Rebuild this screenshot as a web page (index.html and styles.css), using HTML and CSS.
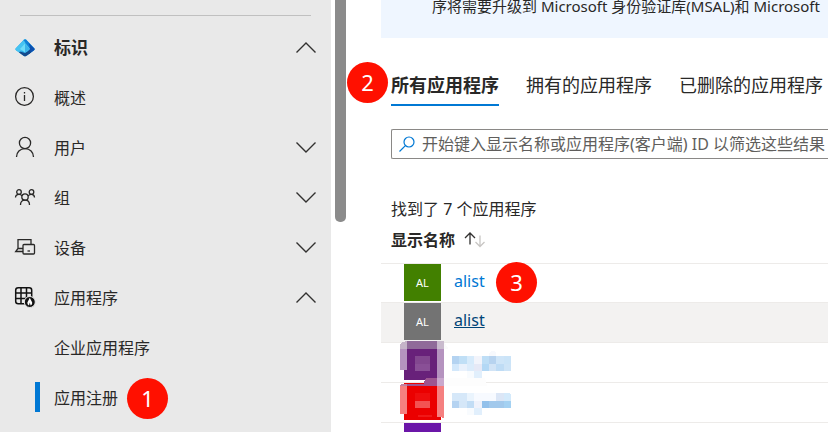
FILE: index.html
```html
<!DOCTYPE html>
<html lang="zh-CN">
<head>
  <meta charset="UTF-8">
  <meta name="viewport" content="width=device-width, initial-scale=1.0">
  <title>应用注册</title>
  <link rel="stylesheet" href="styles.css">
</head>
<body>
  <div class="page">
    <nav class="sidebar">
      <hr>
      <button class="item title" type="button">
        <svg class="icon" viewBox="0 0 20 20">
          <path d="M9 1.6Q10 .6 11 1.6L19.4 10.6Q20 11.6 19 12.3L11.5 17.8Q10 18.9 8.500 17.800L1 12.300Q0 11.600.6 10.600Z" fill="#2aa9e8"/>
          <path d="M10 1L.6 10.600Q0 11.600 1 12.300L5 15L10 8Z" fill="#45c3f2"/>
          <path d="M11 1.600L19.400 10.600Q20 11.600 19 12.300L14 15.900L14 9.500L8.500 1.900Z" fill="#1180d6"/>
          <path d="M13.500 5L19.400 10.600Q20 11.600 19 12.300L11.500 17.800L15 9Z" fill="#0d4fae"/>
          <path d="M5 13.500L10 15L15 12L16 14.500L11.500 17.800Q10 18.900 8.500 17.800L4 14.500Z" fill="#144a8c"/>
          <path d="M10 5.500L15 11L10 14.500L5 11Z" fill="#6fdcf8"/>
          <path d="M10 5.500L15 11L10 14.500Z" fill="#3bb4ea"/>
        </svg>
        <span>标识</span>
        <svg class="chevron" viewBox="0 0 20 12"><path d="M.5 10.500L10 1L19.500 10.500"/></svg>
      </button>
      <a class="item" href="#">
        <svg class="icon line" viewBox="0 0 20 20">
          <circle cx="9.500" cy="8.500" r="8.900"/>
          <path d="M9.500 7V13M9.500 4V5.500"/>
        </svg>
        <span>概述</span>
      </a>
      <button class="item" type="button">
        <svg class="icon line" viewBox="0 0 20 20">
          <circle cx="10" cy="5" r="5.600"/>
          <path d="M1.500 19C1.500 14 5 10.600 10 10.600S18.500 14 18.500 19"/>
        </svg>
        <span>用户</span>
        <svg class="chevron" viewBox="0 0 20 12"><path d="M.5 .5L10 10L19.500 .5"/></svg>
      </button>
      <button class="item" type="button">
        <svg class="icon line" viewBox="0 0 20 20">
          <circle cx="4" cy="4" r="2.300"/>
          <circle cx="16.500" cy="4" r="2.300"/>
          <circle cx="10" cy="9" r="3.200"/>
          <path d="M.5 9.500C.5 7.500 2 6.300 4 6.300S6.500 7 7 8M13 8C13.800 7 14.500 6.300 16.500 6.300S19.500 7.500 19.500 9.500M5.500 17C5.500 14 7 12.200 10 12.200S14.500 14 14.500 17"/>
        </svg>
        <span>组</span>
        <svg class="chevron" viewBox="0 0 20 12"><path d="M.5 .5L10 10L19.500 .5"/></svg>
      </button>
      <button class="item" type="button">
        <svg class="icon line" viewBox="0 0 20 20">
          <path d="M8 13.500H.7L3 10.500V1.700H16V6.500M3 10.500H8"/>
          <rect x="8" y="6.500" width="11.500" height="9.500" rx="1"/>
          <path d="M12.500 13H15"/>
        </svg>
        <span>设备</span>
        <svg class="chevron" viewBox="0 0 20 12"><path d="M.5 .5L10 10L19.500 .5"/></svg>
      </button>
      <button class="item" type="button">
        <svg class="icon apps" viewBox="0 0 20 20">
          <rect x=".7" y="-.3" width="16" height="16" rx="2.500"/>
          <path d="M6 0V15.500M11.500 0V15.500M1 5H16.500M1 10.500H16.500"/>
          <circle cx="14.800" cy="14" r="5.500" class="disc"/>
          <path d="M14.800 9.800L12.400 14.500L12.600 16.200L14 17.400L14.800 14.500L15.600 17.400L17 16.200L17.200 14.500Z" class="mark"/>
        </svg>
        <span>应用程序</span>
        <svg class="chevron" viewBox="0 0 20 12"><path d="M.5 10.500L10 1L19.500 10.500"/></svg>
      </button>
      <a class="item sub" href="#"><span>企业应用程序</span></a>
      <a class="item sub active" href="#"><span>应用注册</span><b class="step step-1">1</b></a>
    </nav>
    <div class="gutter"><div class="scrollbar"></div></div>
    <main>
      <div class="notice">序将需要升级到 Microsoft 身份验证库(MSAL)和 Microsoft</div>
      <div class="tabs">
        <b class="step step-2">2</b>
        <button class="tab selected" type="button">所有应用程序</button>
        <button class="tab" type="button">拥有的应用程序</button>
        <button class="tab" type="button">已删除的应用程序</button>
      </div>
      <label class="search">
        <svg viewBox="0 0 16 16"><circle cx="10" cy="6" r="5"/><path d="M6.400 9.600L.5 15.500"/></svg>
        <input type="text" placeholder="开始键入显示名称或应用程序(客户端) ID 以筛选这些结果" aria-label="搜索">
      </label>
      <p class="count">找到了 7 个应用程序</p>
      <div class="list">
        <table>
          <thead>
            <tr>
              <th colspan="2">显示名称
                <svg class="sort" viewBox="0 0 22 16">
                  <path d="M6 12.500V1.500M1 6L6 1L11 6"/>
                  <path class="down" d="M16 3.500V14.500M11.500 10L16 14.500L20.500 10"/>
                </svg>
              </th>
            </tr>
          </thead>
          <tbody>
            <tr class="first">
              <td class="pic"><div class="avatar green">AL</div></td>
              <td class="name"><a href="#">alist</a><b class="step step-3">3</b></td>
            </tr>
            <tr class="hover">
              <td class="pic"><div class="avatar gray">AL</div></td>
              <td class="name"><a href="#">alist</a></td>
            </tr>
            <tr>
              <td class="pic"><div class="avatar purple"></div></td>
              <td class="name"></td>
            </tr>
            <tr>
              <td class="pic"><div class="avatar red"></div></td>
              <td class="name"></td>
            </tr>
            <tr>
              <td class="pic"><div class="avatar violet"></div></td>
              <td class="name"></td>
            </tr>
          </tbody>
        </table>
        <!-- pixelated names and avatars of the other apps -->
        <svg class="mosaic" viewBox="0 0 390 291" shape-rendering="crispEdges">
          <path d="M51 15H141V39H51Z" fill="#906b99"/>
          <path d="M30 26L38 18L51 15V102H30Z" fill="#b593bf"/>
          <path d="M30 26L38 18L51 15V39H30Z" fill="#c5b4c8"/>
          <path d="M141 15H162V126H141Z" fill="#b593bf"/>
          <path d="M141 15H162V39H141Z" fill="#c9bbcd"/>
          <path d="M162 18L175 38H162Z" fill="#fafafa"/>
          <path d="M75 60H120V83H75Z" fill="#82478f"/>
          <path d="M75 83H120V105H75Z" fill="#894f96"/>
          <path d="M108 126H141V150H51V144H100Z" fill="#9d5690"/>
          <path d="M141 126H162V150H141Z" fill="#c9a8cd"/>
          <path d="M162 126H285L291 150H162Z" fill="#fdfdfd"/>
          <path d="M30 148L36 144H51V234H30Z" fill="#f58080"/>
          <path d="M30 148L36 144H51V150H30Z" fill="#c2819f"/>
          <path d="M141 150H162V245H156V243H141Z" fill="#f58080"/>
          <path d="M84 237H125V243H84Z" fill="#f01818"/>
          <path d="M75 172H120V195H75Z" fill="#ee0d0d"/>
          <path d="M75 195H120V216H75Z" fill="#f35252"/>
          <path d="M186 60H207V83H186Z" fill="#b4d3f1"/>
          <path d="M207 60H231V83H207Z" fill="#c0dff6"/>
          <path d="M231 60H252V83H231Z" fill="#d7ebfb"/>
          <path d="M252 60H276V83H252Z" fill="#f2f4fb"/>
          <path d="M276 60H297V83H276Z" fill="#bedef6"/>
          <path d="M297 60H318V83H297Z" fill="#b7d3ef"/>
          <path d="M318 60H342V83H318Z" fill="#cfe5f8"/>
          <path d="M342 60H363V83H342Z" fill="#cbe4f8"/>
          <path d="M297 51L303 45H312L318 51V60H297Z" fill="#f7f9fd"/>
          <path d="M186 83H207V105H186Z" fill="#d3e8fb"/>
          <path d="M207 83H231V105H207Z" fill="#e9f1fc"/>
          <path d="M231 83H252V105H231Z" fill="#dcecfb"/>
          <path d="M252 83H276V105H252Z" fill="#e6e9f6"/>
          <path d="M276 83H297V105H276Z" fill="#b3d8f5"/>
          <path d="M297 83H318V105H297Z" fill="#d2e4f6"/>
          <path d="M318 83H342V105H318Z" fill="#bfdcf5"/>
          <path d="M342 83H363V105H342Z" fill="#cee4f7"/>
          <path d="M231 105H252V126H231Z" fill="#f8fbfe"/>
          <path d="M252 105H276V126H252Z" fill="#e1effc"/>
          <path d="M186 171H231V195H186Z" fill="#d6e8f9"/>
          <path d="M231 171H252V195H231Z" fill="#eaf4fd"/>
          <path d="M252 171H318V195H252Z" fill="#f7faff"/>
          <path d="M318 171H342V195H318Z" fill="#dbe6f6"/>
          <path d="M342 171H357L363 176V195H342Z" fill="#d4eafb"/>
          <path d="M186 195H207V216H186Z" fill="#b5d3f1"/>
          <path d="M207 195H231V216H207Z" fill="#d5e7f8"/>
          <path d="M231 195H252V216H231Z" fill="#c2ddf5"/>
          <path d="M252 195H276V216H252Z" fill="#eff2fb"/>
          <path d="M276 195H297V216H276Z" fill="#93c1eb"/>
          <path d="M297 195H342V216H297Z" fill="#a2c9ec"/>
          <path d="M342 195H363V216H342Z" fill="#a4d1f2"/>
          <path d="M231 216H252V237H231Z" fill="#f8fbfe"/>
          <path d="M252 216H276V237H252Z" fill="#e1effc"/>
        </svg>
      </div>
    </main>
  </div>
</body>
</html>
```
FILE: styles.css
```css
* { margin: 0; padding: 0; box-sizing: border-box; }
body {
  font-family: "Noto Sans", "Noto Sans CJK SC", sans-serif;
  font-size: 16px;
  color: #292827;
  background: white;
}
button, input {
  font: inherit;
  color: inherit;
  border: none;
  background: none;
}
a { text-decoration: none; }
svg { flex: none; fill: none; }
.page {
  display: flex;
  height: 100vh;
  overflow: hidden;
}

/* left menu */
.sidebar {
  flex: 0 0 331px;
  background: #e9e9e9;
}
.sidebar hr {
  border: none;
  border-top: 1px solid #c0c0c0;
  margin: 15px 20px 7px;
}
.item {
  position: relative;
  display: flex;
  align-items: center;
  gap: 19px;
  width: 100%;
  height: 50px;
  padding: 0 15px;
  line-height: 24px;
  color: #292827;
  text-align: left;
  cursor: pointer;
}
.item.title {
  font-size: 17px;
  font-weight: bold;
}
.icon {
  width: 20px;
  height: 20px;
  overflow: visible;
}
.line {
  stroke: #292827;
  stroke-width: 1.3;
}
.apps {
  stroke: #111;
  stroke-width: 1.5;
}
.apps .disc { fill: #111; stroke: #e9e9e9; stroke-width: 1; }
.apps .mark { fill: white; stroke: none; }
.chevron {
  width: 20px;
  height: 12px;
  margin-left: auto;
  stroke: #323130;
  stroke-width: 1.4;
}
.item.sub { padding-left: 54px; }
.item.active::before {
  content: "";
  position: absolute;
  left: 35px;
  top: 9px;
  width: 5px;
  height: 30px;
  background: #0078d4;
}

.gutter {
  flex: 0 0 50px;
  padding-left: 4px;
}
.scrollbar {
  width: 11px;
  height: 222px;
  background: #8b8b8b;
  border-radius: 0 0 5px 5px;
}

/* numbered steps */
.step {
  position: absolute;
  width: 41px;
  height: 41px;
  border-radius: 50%;
  background: #ff1000;
  color: white;
  font-size: 22px;
  font-weight: normal;
  line-height: 41px;
  text-align: center;
  z-index: 2;
}
.step-1 { left: 127px; top: 5px; }
.step-2 { left: -44px; top: -4px; }
.step-3 { left: 55px; top: -2px; }

/* content */
main {
  flex: 1;
  min-width: 0;
}
.notice {
  padding: 0 0 26px 51px;
  background: #eff6ff;
  font-size: 15px;
  line-height: 12px;
  white-space: nowrap;
}
.tabs {
  position: relative;
  display: flex;
  gap: 27px;
  margin: 28px 0 23px 10px;
}
.tab {
  height: 40px;
  font-size: 18px;
  line-height: 38px;
  white-space: nowrap;
  border-bottom: 2px solid transparent;
  cursor: pointer;
}
.tab.selected {
  font-weight: bold;
  border-color: #0078d4;
}
.search {
  display: flex;
  align-items: center;
  gap: 7px;
  height: 30px;
  margin-left: 10px;
  padding-left: 7px;
  border: 1px solid #8a8886;
  border-right: none;
  border-radius: 2px 0 0 2px;
}
.search svg {
  width: 16px;
  height: 16px;
  stroke: #0078d4;
  stroke-width: 1.2;
}
.search input {
  flex: 1;
  min-width: 0;
  height: 28px;
  outline: none;
}
.search input::placeholder { color: #605e5c; opacity: 1; }
.count {
  margin: 38px 0 8px 10px;
  line-height: 24px;
}
.list { position: relative; }
table {
  width: 100%;
  border-collapse: separate;
  border-spacing: 0;
}
th {
  height: 35px;
  padding: 0 0 11px 10px;
  border-bottom: 1px solid #edebe9;
  line-height: 23px;
  text-align: left;
}
.sort {
  width: 22px;
  height: 16px;
  margin-left: 5px;
  vertical-align: -2px;
  stroke: #323130;
  stroke-width: 1.3;
}
.sort .down { stroke: #c8c6c4; }
td {
  height: 40px;
  border-bottom: 1px solid #edebe9;
  vertical-align: top;
}
.first td { height: 39px; }
.pic {
  width: 60px;
  padding-left: 23px;
}
.name {
  position: relative;
  padding-left: 13px;
  line-height: 34px;
}
.name a { color: #0078d4; }
.hover td { background: #f3f2f1; }
.hover a {
  color: #004578;
  text-decoration: underline;
}
.avatar {
  width: 37px;
  height: 37px;
  color: white;
  font-size: 11px;
  line-height: 37px;
  text-align: center;
}
.green { background: #428000; }
.gray { background: #737373; }
.purple { background: #68217a; }
.red { background: #eb0000; }
.violet { background: #6b16a8; }
.mosaic {
  position: absolute;
  left: 9px;
  top: 107px;
  width: 130px;
  height: 97px;
}
```
